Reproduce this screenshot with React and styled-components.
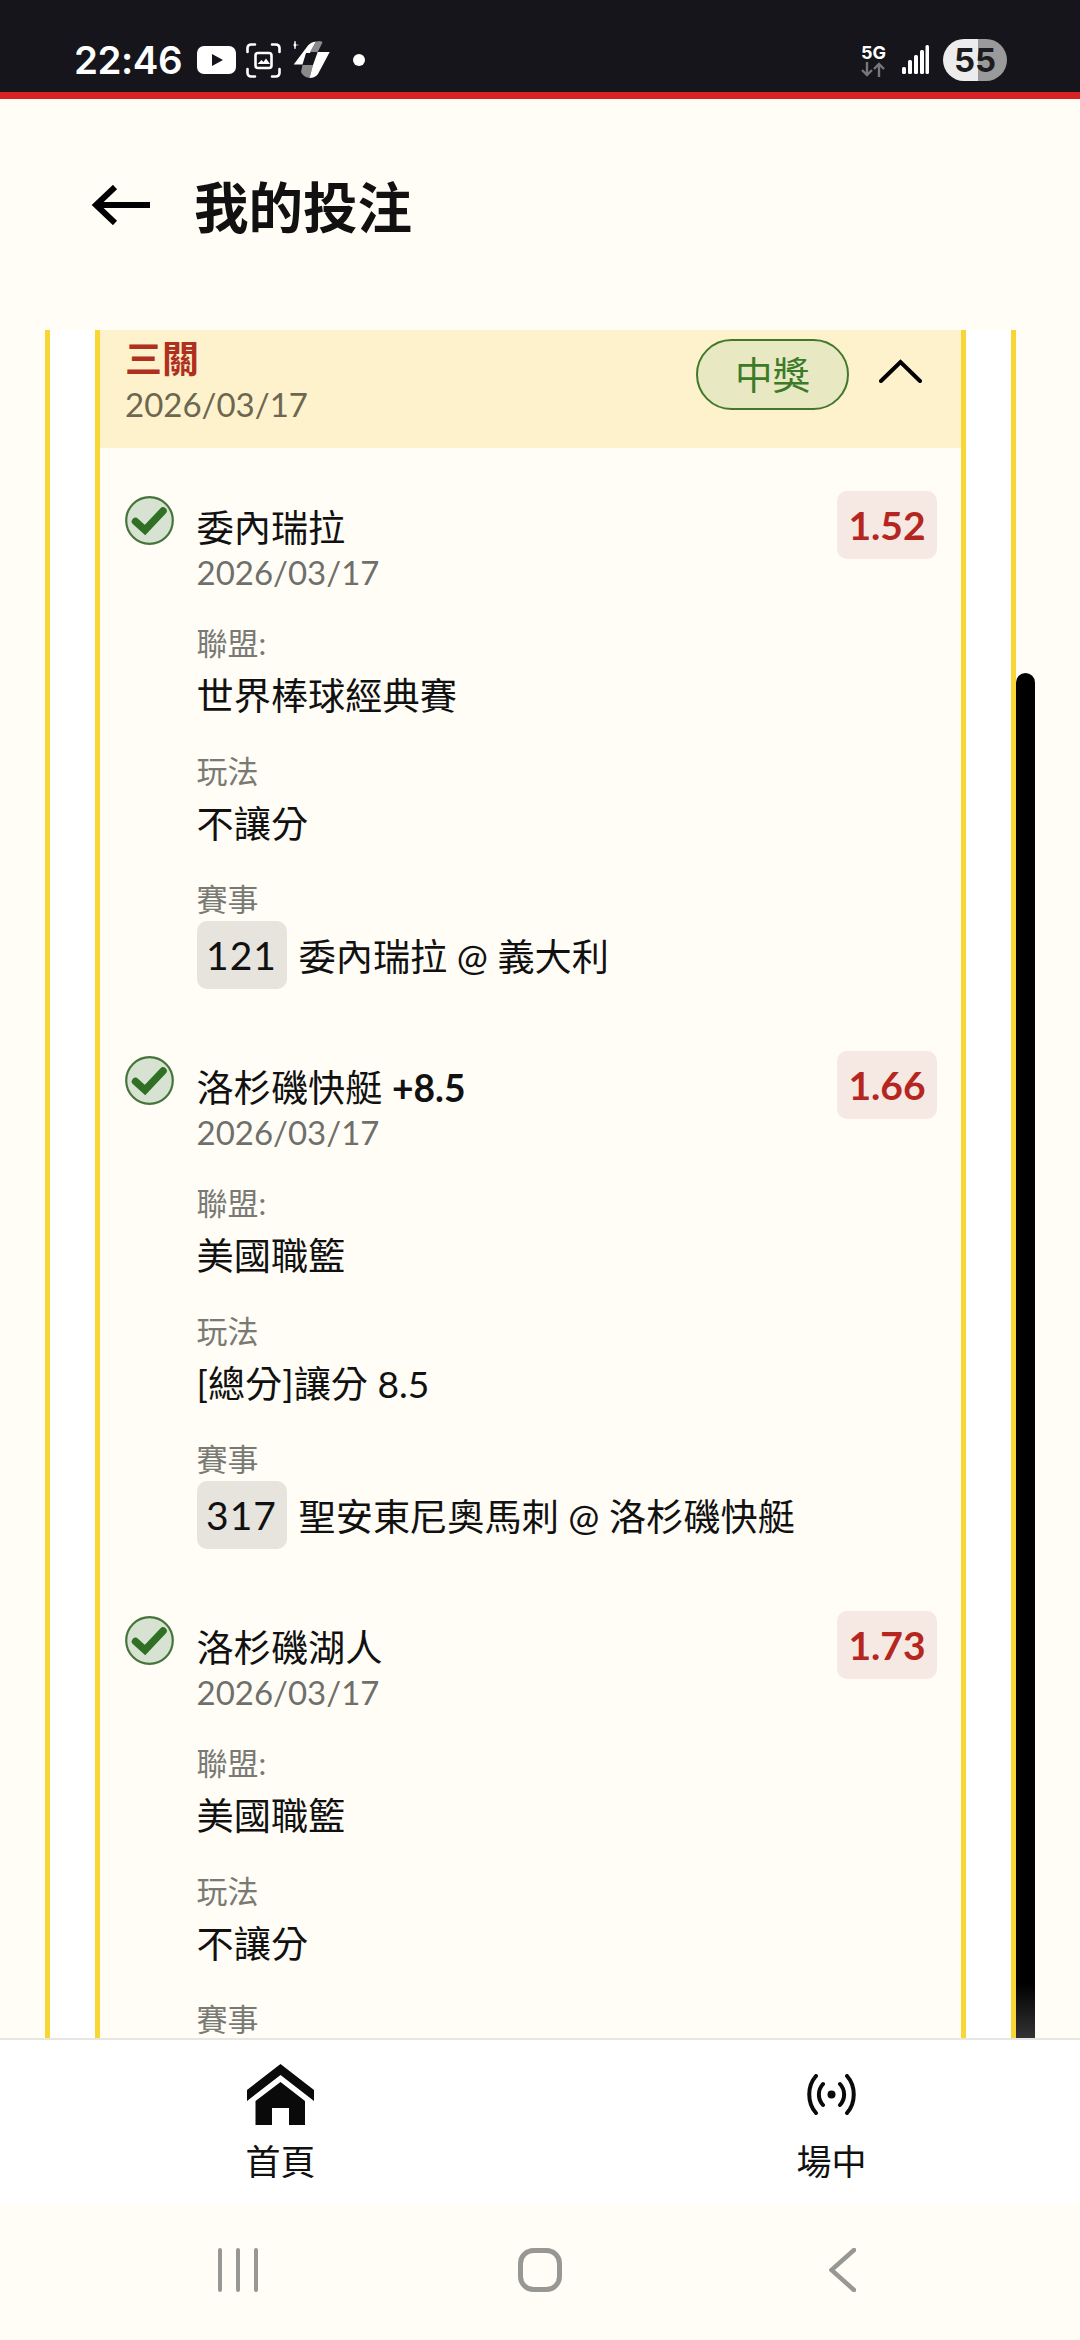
import React from 'react'
import styled, { createGlobalStyle } from 'styled-components'

const CJK = `Lato, "Noto Sans CJK TC", sans-serif`

// Styles ==================================
const GlobalStyle = createGlobalStyle`
  html, body {
    margin: 0;
    padding: 0;
    background: #fffdf6;
  }
`
const Page = styled.div`
  width: 1080px;
  height: 2340px;
  display: flex;
  flex-direction: column;
  overflow: hidden;
  background: #fffdf6;
  font-family: ${CJK};
  color: #111;
`
const StatusBar = styled.div`
  height: 64px;
  flex: none;
  box-sizing: content-box;
  border-bottom: 7px solid #d62222;
  background: #15151b;
  display: flex;
  align-items: center;
  justify-content: space-between;
  padding: 28px 73px 0 74px;
`
const StatusGroup = styled.div`
  display: flex;
  align-items: center;
`
const StatusIcon = styled.svg`
  margin-right: ${props => props.$gap || 0}px;
`
const Time = styled.span`
  font-family: Inter, sans-serif;
  font-weight: 600;
  font-size: 38.5px;
  color: #fff;
  margin-right: 15px;
  letter-spacing: -0.5px;
`
const Network = styled.div`
  display: flex;
  flex-direction: column;
  align-items: center;
  margin-right: 16px;
`
const NetworkText = styled.span`
  font-family: Inter, sans-serif;
  font-weight: 700;
  font-size: 18px;
  line-height: 19px;
  color: #fff;
`
const Battery = styled.div`
  width: 64px;
  height: 42px;
  margin-left: 14px;
  border-radius: 21px;
  background: linear-gradient(to right, #ececec 55%, #9a9a9a 55%);
  color: #1c1c20;
  font-family: Inter, sans-serif;
  font-weight: 700;
  font-size: 33px;
  line-height: 42px;
  text-align: center;
`
const Header = styled.div`
  height: 231px;
  flex: none;
  display: flex;
  align-items: center;
  gap: 44px;
  padding: 0 0 20px 90px;
  box-sizing: border-box;
`
const Title = styled.h1`
  margin: 0;
  font-size: 54.5px;
  font-weight: 700;
  font-family: "Noto Sans CJK TC", sans-serif;
  line-height: 70px;
`
const Scroller = styled.div`
  position: relative;
  flex: 1;
  min-height: 0;
  overflow: hidden;
`
const OuterCard = styled.div`
  width: 971px;
  margin-left: 45px;
  box-sizing: border-box;
  border-left: 5px solid #f7d636;
  border-right: 5px solid #f7d636;
  background: #fff;
  padding: 0 45px;
`
const InnerCard = styled.div`
  border-left: 5px solid #f7d636;
  border-right: 5px solid #f7d636;
  background: #fffdf6;
`
const CardHead = styled.div`
  height: 118px;
  box-sizing: border-box;
  background: #fdf2cc;
  display: flex;
  align-items: flex-start;
  justify-content: space-between;
  padding: 7px 39px 0 25px;
`
const HeadTitle = styled.div`
  font-size: 37px;
  line-height: 44px;
  font-weight: 700;
  color: #b0301f;
`
const HeadDate = styled.div`
  font-size: 33px;
  line-height: 44px;
  margin-top: 1px;
  color: #6d6650;
`
const HeadRight = styled.div`
  display: flex;
  align-items: flex-start;
  gap: 30px;
`
const Pill = styled.div`
  width: 153px;
  height: 71px;
  margin-top: 2px;
  box-sizing: border-box;
  border: 2px solid #43772c;
  border-radius: 36px;
  background: #e8e9c2;
  color: #3c7a2a;
  font-size: 37.5px;
  line-height: 67px;
  text-align: center;
`
const Chevron = styled.svg`
  margin-top: 22px;
`
const BetList = styled.div`
  padding: 43px 24px 0 25px;
  display: flex;
  flex-direction: column;
  gap: 62px;
`
const BetRow = styled.div`
  display: flex;
  align-items: flex-start;
`
const CheckIcon = styled.svg`
  flex: none;
  margin-top: 5px;
  margin-right: 22.5px;
`
const BetBody = styled.div`
  flex: 1;
  min-width: 0;
  padding-top: 15px;
`
const BetName = styled.div`
  font-size: 37.2px;
  line-height: 44px;
  b {
    font-weight: 700;
  }
`
const BetDate = styled.div`
  font-size: 33px;
  line-height: 44px;
  margin-bottom: 0;
  color: #6f6f6b;
`
const Fields = styled.div`
  margin-top: 27px;
  display: flex;
  flex-direction: column;
  gap: 32px;
`
const Label = styled.div`
  font-size: 31px;
  line-height: 44px;
  color: #7a7a75;
`
const Value = styled.div`
  font-size: 37.2px;
  line-height: 44px;
  margin-top: 9px;
  margin-bottom: -1px;
`
const MatchRow = styled.div`
  display: flex;
  align-items: center;
  gap: 12px;
  font-size: 37.2px;
`
const MatchNo = styled.span`
  width: 90px;
  height: 68px;
  border-radius: 10px;
  background: #e6e4dd;
  font-size: 39px;
  line-height: 68px;
  text-align: center;
  letter-spacing: 1px;
`
const Odds = styled.div`
  flex: none;
  width: 100px;
  height: 68px;
  border-radius: 10px;
  background: #f6e9e3;
  color: #b5261f;
  font-size: 39px;
  font-weight: 700;
  line-height: 68px;
  text-align: center;
`
const ScrollThumb = styled.div`
  position: absolute;
  left: 1016px;
  top: 343px;
  bottom: 0;
  width: 19px;
  border-radius: 10px 10px 0 0;
  background: linear-gradient(to bottom, #000 96%, #333 100%);
`
const BottomNav = styled.div`
  flex: none;
  height: 165px;
  box-sizing: border-box;
  border-top: 2px solid #e8e6e3;
  background: #fff;
  display: flex;
  justify-content: space-between;
  padding: 0 213px 0 245px;
`
const NavItem = styled.div`
  width: 71px;
  height: 163px;
  display: flex;
  flex-direction: column;
  align-items: center;
`
const NavIconSlot = styled.div`
  height: 98px;
  box-sizing: border-box;
  padding-top: 11px;
  display: flex;
  align-items: center;
  justify-content: center;
`
const NavLabel = styled.div`
  font-size: 35px;
  line-height: 44px;
  margin-top: 1px;
  white-space: nowrap;
`
const SystemNav = styled.div`
  flex: none;
  height: 137px;
  display: flex;
  padding: 45px 224px 0 218px;
  box-sizing: border-box;
  align-items: flex-start;
  justify-content: space-between;
`
const HomeKey = styled.svg`
  margin-right: 7px;
`
// =========================================
const bets = [
  { name: '委內瑞拉', odds: '1.52', league: '世界棒球經典賽', play: '不讓分', no: '121', match: '委內瑞拉 @ 義大利' },
  { name: '洛杉磯快艇', extra: '+8.5', odds: '1.66', league: '美國職籃', play: '[總分]讓分 8.5', no: '317', match: '聖安東尼奧馬刺 @ 洛杉磯快艇' },
  { name: '洛杉磯湖人', odds: '1.73', league: '美國職籃', play: '不讓分' }
]

const YoutubeGlyph = () =>
  <StatusIcon $gap={10} width="39" height="28" viewBox="0 0 39 28">
    <path fill="#fff" fillRule="evenodd" d="M7 0h25a7 7 0 0 1 7 7v14a7 7 0 0 1-7 7H7a7 7 0 0 1-7-7V7a7 7 0 0 1 7-7zM15 8v12l11-6z" />
  </StatusIcon>

const ScreenshotGlyph = () =>
  <StatusIcon $gap={12} width="35" height="35" viewBox="0 0 35 35">
    <g fill="none" stroke="#fff" strokeWidth="2.6" strokeLinecap="round">
      <path d="M1.5 9V5a3.5 3.5 0 0 1 3.5-3.5h4M26 1.5h4A3.5 3.5 0 0 1 33.5 5v4M33.5 26v4a3.5 3.5 0 0 1-3.5 3.5h-4M9 33.5H5A3.5 3.5 0 0 1 1.5 30v-4" />
      <rect x="9.5" y="10" width="16" height="15" rx="2.5" />
    </g>
    <path fill="#fff" d="M11.5 21l4-4 2 2 2.5-3.500 4 5.500z" />
  </StatusIcon>

const SpinGlyph = () =>
  <StatusIcon $gap={22} width="38" height="40" viewBox="12 10 38 40">
    <path fill="#fff" d="M12.700 34.500L27 15.500Q30 12 35 11.500L29 23H25L21.500 34.500z" />
    <path fill="#8a8a8a" d="M35 11.500Q41 10 41.500 12.500L36.700 22H29zM21.500 35H32L28.500 48Q22 47 20 42z" />
    <path fill="#fff" d="M36.700 22H48.700L37 44Q34 48 28.500 48L32 35z" />
    <path fill="#fff" d="M13.500 11h1l.5 3.500 3.500.5-3.500.5-.5 3.500h-1l-.5-3.500-3.500-.5 3.500-.5z" />
  </StatusIcon>

const NetworkArrows = () =>
  <svg width="25" height="15" viewBox="0 0 25 15">
    <path fill="none" stroke="#77777a" strokeWidth="2.4" d="M6 0v13M1 8l5 5 5-5M18 15V2M13 7l5-5 5 5" />
  </svg>

const SignalGlyph = () =>
  <svg width="27" height="30" viewBox="0 0 27 30">
    <g fill="#fff">
      <rect x="0" y="22" width="4" height="7" rx="1.500" />
      <rect x="6" y="15" width="4" height="14" rx="1.500" />
      <rect x="12" y="10" width="4" height="19" rx="1.500" />
      <rect x="18" y="5" width="4" height="24" rx="1.500" />
      <rect x="23.500" y="0" width="3.500" height="29" rx="1.500" />
    </g>
  </svg>

const BackArrow = () =>
  <svg width="60" height="40" viewBox="0 0 60 40">
    <path fill="none" stroke="#000" strokeWidth="6" d="M60 20H6M25 2L6 20l19 18" />
  </svg>

const Check = () =>
  <CheckIcon width="49" height="49" viewBox="0 0 49 49">
    <circle cx="24.500" cy="24.500" r="23.300" fill="#d8e2d2" stroke="#457539" strokeWidth="2.200" />
    <path fill="none" stroke="#2f7025" strokeWidth="7.500" strokeLinecap="round" strokeLinejoin="miter" d="M10.500 25.500l9.500 8.500L38 15" />
  </CheckIcon>

const HomeGlyph = () =>
  <svg width="67" height="61" viewBox="0 0 67 61">
    <path fill="#0a0a0a" d="M33.500 0L67 26v11L33.500 11 0 37V26z" />
    <path fill="#0a0a0a" d="M33.500 18L58 37v24H42V44H25v17H8.500V37z" />
  </svg>

const RadioGlyph = () =>
  <svg width="51" height="41" viewBox="0 0 51 41">
    <circle cx="25.500" cy="20.500" r="4" fill="#0a0a0a" />
    <path fill="none" stroke="#0a0a0a" strokeWidth="4" strokeLinecap="round" d="M10 2C1 12 1 29 10 39M17 10C11.500 16 11.500 25 17 31M41 2C50 12 50 29 41 39M34 10C39.500 16 39.500 25 34 31" />
  </svg>

const BetItem = ({ bet }) =>
  <BetRow>
    <Check />
    <BetBody>
      <BetName>{bet.name}{bet.extra && <> <b>{bet.extra}</b></>}</BetName>
      <BetDate>2026/03/17</BetDate>
      <Fields>
        <div>
          <Label>聯盟:</Label>
          <Value>{bet.league}</Value>
        </div>
        <div>
          <Label>玩法</Label>
          <Value>{bet.play}</Value>
        </div>
        <div>
          <Label>賽事</Label>
          {bet.no &&
            <MatchRow>
              <MatchNo>{bet.no}</MatchNo>
              <span>{bet.match}</span>
            </MatchRow>}
        </div>
      </Fields>
    </BetBody>
    <Odds>{bet.odds}</Odds>
  </BetRow>

const App = () =>
  <Page>
    <GlobalStyle />
    <StatusBar>
      <StatusGroup>
        <Time>22:46</Time>
        <YoutubeGlyph />
        <ScreenshotGlyph />
        <SpinGlyph />
        <svg width="12" height="12" viewBox="0 0 12 12"><circle cx="6" cy="6" r="6" fill="#fff" /></svg>
      </StatusGroup>
      <StatusGroup>
        <Network>
          <NetworkText>5G</NetworkText>
          <NetworkArrows />
        </Network>
        <SignalGlyph />
        <Battery>55</Battery>
      </StatusGroup>
    </StatusBar>
    <Header>
      <BackArrow />
      <Title>我的投注</Title>
    </Header>
    <Scroller>
      <OuterCard>
        <InnerCard>
          <CardHead>
            <div>
              <HeadTitle>三關</HeadTitle>
              <HeadDate>2026/03/17</HeadDate>
            </div>
            <HeadRight>
              <Pill>中獎</Pill>
              <Chevron width="43" height="24" viewBox="0 0 43 24">
                <path fill="none" stroke="#000" strokeWidth="4" strokeLinecap="round" d="M2 22L21.500 3 41 22" />
              </Chevron>
            </HeadRight>
          </CardHead>
          <BetList>
            {bets.map(bet => <BetItem key={bet.name} bet={bet} />)}
          </BetList>
        </InnerCard>
      </OuterCard>
      <ScrollThumb />
    </Scroller>
    <BottomNav>
      <NavItem>
        <NavIconSlot><HomeGlyph /></NavIconSlot>
        <NavLabel>首頁</NavLabel>
      </NavItem>
      <NavItem>
        <NavIconSlot><RadioGlyph /></NavIconSlot>
        <NavLabel>場中</NavLabel>
      </NavItem>
    </BottomNav>
    <SystemNav>
      <svg width="40" height="44" viewBox="0 0 40 44">
        <g fill="#979793">
          <rect x="0" y="0" width="4" height="44" rx="2" />
          <rect x="18" y="0" width="4" height="44" rx="2" />
          <rect x="36" y="0" width="4" height="44" rx="2" />
        </g>
      </svg>
      <HomeKey width="44" height="44" viewBox="0 0 44 44">
        <rect x="2.500" y="2.500" width="39" height="39" rx="13" fill="none" stroke="#979793" strokeWidth="5" />
      </HomeKey>
      <svg width="27" height="44" viewBox="0 0 27 44">
        <path fill="none" stroke="#979793" strokeWidth="4.500" strokeLinecap="round" d="M25 2L2.500 22 25 42" />
      </svg>
    </SystemNav>
  </Page>

export default App
